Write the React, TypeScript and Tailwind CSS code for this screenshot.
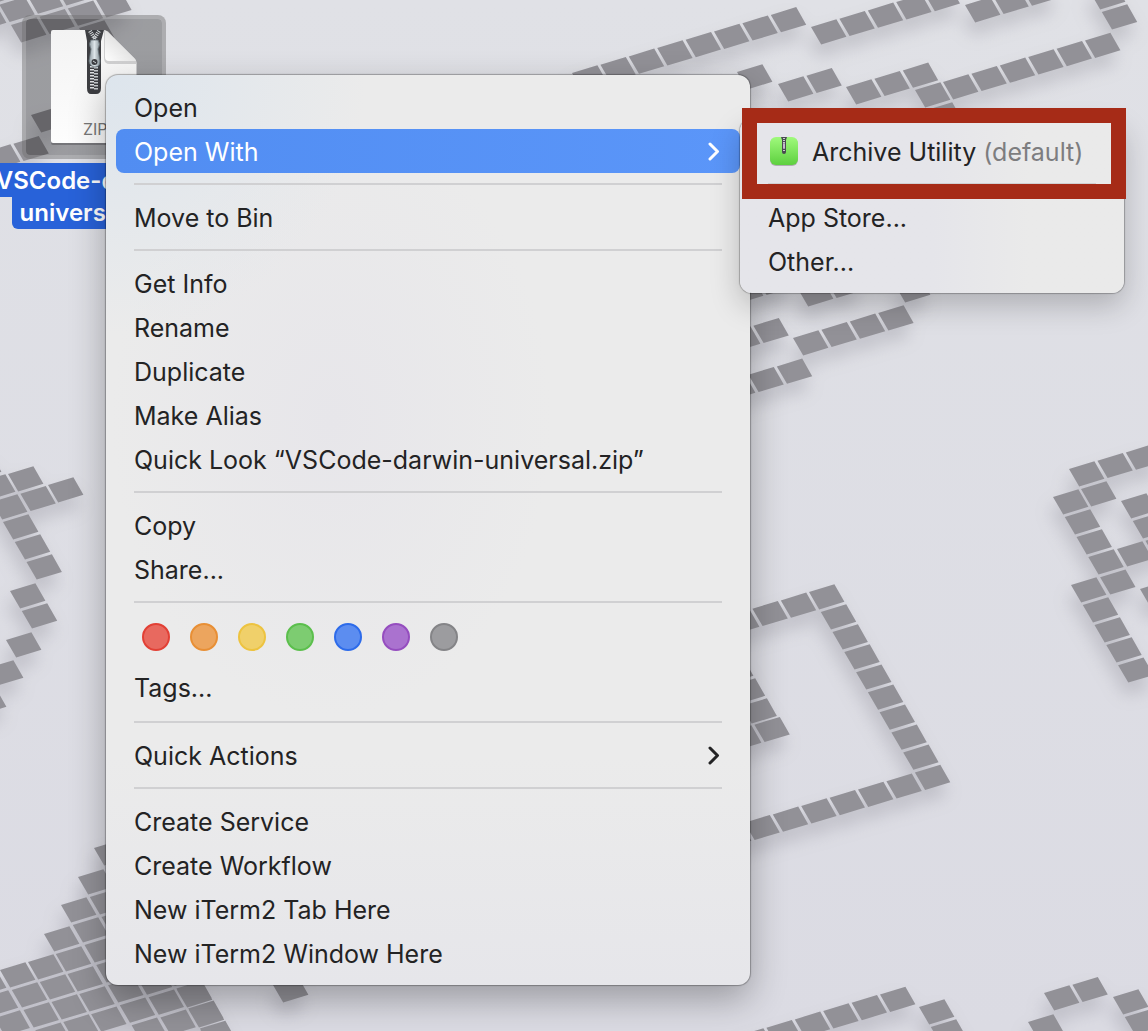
import type { ReactNode } from "react";

type Run = [x: number, y: number, count: number];

const STEP_RIGHT = [28.4, -8.3];
const STEP_DOWN = [11.77, 20.05];

const rowRuns: Run[] = [
  [11, 25, 4], [-29, 13, 4], [-41, -7, 2], [79, 28, 1], [31, 115, 1], [-15, 152, 2],
  [572, 73, 8], [811, 27, 5], [965, 5, 3], [943, 82, 6], [846, 87, 3], [737, 72, 1], [778, 84, 2],
  [793, 338, 4], [725, 334, 2], [720, 383, 3], [798, 289, 2], [895, 285, 1], [728, 286, 2],
  [8, 474, 1], [48, 485, 1], [-8, 502, 2], [-20, 482, 1], [-34, 462, 1], [6, 640, 1], [-12, 668, 1], [-29, 697, 1],
  [1069, 469, 3], [1081, 489, 1], [1117, 549, 2], [1140, 589, 1],
  [724, 617, 3], [726, 733, 2], [716, 831, 7],
  [273, 985, 1], [738, 1036, 6], [1044, 993, 2], [1028, 1022, 1],
];

const columnRuns: Run[] = [
  [1090, -8, 2], [915, 90, 2], [3, 522, 3], [10, 591, 2],
  [1053, 497, 5], [1121, 501, 2], [1071, 585, 5],
  [809, 592, 10], [718, 666, 3],
  [177, 990, 3], [94, 848, 10], [78, 877, 8], [61, 905, 7], [44, 934, 5], [28, 962, 4], [0, 970, 4], [-29, 978, 3],
  [919, 1007, 2], [1113, 997, 2],
];

function tiles(runs: Run[], step: number[]) {
  return runs
    .flatMap(([x, y, count]) =>
      Array.from({ length: count }, (_, i) => {
        const px = (x + step[0] * i).toFixed(1);
        const py = (y + step[1] * i).toFixed(1);
        return `M${px} ${py}l25.4 -7.8l10 17.6l-25.2 7.6z`;
      }),
    )
    .join("");
}

function Wallpaper() {
  return (
    <svg
      className="absolute inset-0 h-full w-full"
      viewBox="0 0 1148 1031"
      preserveAspectRatio="xMinYMin slice"
      aria-hidden="true"
    >
      <defs>
        <linearGradient id="sky" x1="0" y1="0" x2="0" y2="1">
          <stop offset="0" stopColor="#e0e1e6" />
          <stop offset="1" stopColor="#dbdbe3" />
        </linearGradient>
        <filter id="soft" x="-5%" y="-5%" width="110%" height="110%">
          <feGaussianBlur stdDeviation="9" />
        </filter>
      </defs>
      <rect width="1148" height="1031" fill="url(#sky)" />
      <path
        d={tiles(rowRuns, STEP_RIGHT) + tiles(columnRuns, STEP_DOWN)}
        transform="translate(-3 12)"
        fill="#8f8e98"
        opacity="0.42"
        filter="url(#soft)"
      />
      <path d={tiles(rowRuns, STEP_RIGHT) + tiles(columnRuns, STEP_DOWN)} fill="#929197" />
    </svg>
  );
}

function ZipIcon() {
  return (
    <svg className="h-[120px] w-[92px]" viewBox="0 0 92 120" aria-hidden="true">
      <defs>
        <linearGradient id="paper" x1="0" y1="0" x2="0" y2="1">
          <stop offset="0" stopColor="#f3f3f3" />
          <stop offset="1" stopColor="#fdfdfd" />
        </linearGradient>
        <linearGradient id="fold" x1="0" y1="1" x2="0.6" y2="0.3">
          <stop offset="0" stopColor="#ffffff" />
          <stop offset="1" stopColor="#dedede" />
        </linearGradient>
        <linearGradient id="metal" x1="0" y1="0" x2="1" y2="0">
          <stop offset="0" stopColor="#8e9aa1" />
          <stop offset="0.5" stopColor="#dde5e9" />
          <stop offset="1" stopColor="#8a959b" />
        </linearGradient>
      </defs>
      <path d="M5 3h52l29 29v82q0 2 -2 2H5q-2 0 -2 -2V5q0 -2 2 -2z" fill="#4a4a4e" opacity="0.45" transform="translate(0 1)" />
      <path d="M5 2h50q3 0 5 2l27 27q1.500 2 1.500 4v79q0 1 -2 1H5q-2 0 -2 -2V4q0 -2 2 -2z" fill="url(#paper)" />
      <path d="M56 3v27q0 6 6 6h26V33L60 3z" fill="#a9a9ab" opacity="0.5" />
      <path d="M57 3v26q0 4 4 4h27q0 -1 -2 -3L60 4q-2 -2 -3 -1z" fill="url(#fold)" />
      <path d="M37 2h19l-3 11v47q0 6 -5 6h-5q-4 0 -4 -6V13z" fill="#3d3e42" />
      <path d="M42 3l5 8M51 3l-5 8" stroke="#d4d7da" strokeWidth="4" strokeDasharray="1 1" />
      <path d="M44 38v24" stroke="#e0e2e4" strokeWidth="4" strokeDasharray="1.500 1.500" />
      <path d="M48 39v24" stroke="#c8cbce" strokeWidth="4" strokeDasharray="1.500 1.500" />
      <path d="M43 12h7q3 4 0 9l2 12q0 6 -5 6t-6 -6l2 -12q-3 -5 0 -9z" fill="url(#metal)" stroke="#677278" strokeWidth="0.8" />
      <circle cx="46.500" cy="34" r="3" fill="#3d3e42" />
      <path d="M45 33l3 2" stroke="#cfd5d8" />
      <text x="35" y="107" fontFamily="Inter, sans-serif" fontSize="16" fill="#777">ZIP</text>
    </svg>
  );
}

function DesktopFile() {
  return (
    <button type="button" className="absolute top-[15px] left-[-16px] flex w-[220px] flex-col items-center">
      <span className="flex h-[144px] w-[144px] items-start justify-center rounded-[8px] border-4 border-[#6e6e6e]/45 bg-black/30 bg-clip-padding pt-[9px]">
        <ZipIcon />
      </span>
      <span className="mt-1 flex flex-col items-center text-[24px] leading-[32px] font-semibold text-white">
        <span className="h-[34px] bg-[#2862d9] px-2 pt-[2px] whitespace-nowrap">VSCode-darwin-</span>
        <span className="rounded-b-[6px] bg-[#2862d9] px-2">universal.zip</span>
      </span>
    </button>
  );
}

function Chevron() {
  return (
    <svg className="mb-1 h-[20px] w-[14px]" viewBox="0 0 14 20" fill="none" stroke="currentColor" strokeWidth="3" aria-hidden="true">
      <path d="M3 3l7.500 7.500L3 18" strokeLinecap="round" strokeLinejoin="round" />
    </svg>
  );
}

function Item({ children }: { children: ReactNode }) {
  return (
    <button type="button" role="menuitem" className="flex h-11 w-full items-center pt-1 pr-[19px] pl-[18px] text-left whitespace-nowrap">
      {children}
    </button>
  );
}

function Separator() {
  return (
    <div role="separator" className="flex h-[22px] items-center px-[18px]">
      <div className="h-[2px] w-full bg-[#d0d0d2]" />
    </div>
  );
}

function ArchiveIcon() {
  return (
    <svg className="mr-3 mb-1 h-8 w-8" viewBox="0 0 32 32" aria-hidden="true">
      <defs>
        <linearGradient id="green" x1="0" y1="0" x2="0" y2="1">
          <stop offset="0" stopColor="#a0fa7c" />
          <stop offset="1" stopColor="#5dd03f" />
        </linearGradient>
      </defs>
      <rect x="2" y="3" width="28" height="28" rx="6" fill="#777" opacity="0.5" />
      <rect x="2" y="2" width="28" height="28" rx="6" fill="url(#green)" />
      <path d="M13 2h6l-1 3v12q0 2 -2 2t-2 -2V5z" fill="#4a4a52" />
      <path d="M16 3v5M16 15v2" stroke="#c9cbd0" strokeWidth="2" strokeDasharray="1 1" />
      <rect x="15" y="8" width="2" height="6" rx="1" fill="#c3b9cc" />
    </svg>
  );
}

function Submenu() {
  return (
    <div className="absolute top-[-10px] left-full w-[384px] text-[#232324]">
      <div role="menu" aria-label="Open With" className="rounded-[12px] bg-linear-to-r from-[#e5e5ea] from-50% to-[#eaeaea] to-75% p-[10px] shadow-[0_0_1px_1px_rgba(0,0,0,0.25),0_12px_30px_rgba(0,0,0,0.22)]">
        <Item>
          <ArchiveIcon />
          <span>
            Archive Utility <span className="text-[#7d7d7f]">(default)</span>
          </span>
        </Item>
        <Separator />
        <Item>App Store...</Item>
        <Item>Other...</Item>
      </div>
      <div className="pointer-events-none absolute top-[-11px] right-[-2px] left-[2px] h-[91px] border-[15px] border-[#a62b17]" />
    </div>
  );
}

const tags = [
  { name: "Red", style: "border-[#e24035] bg-[#e8695f]" },
  { name: "Orange", style: "border-[#e88f35] bg-[#eca55e]" },
  { name: "Yellow", style: "border-[#edc340] bg-[#f0d06a]" },
  { name: "Green", style: "border-[#5bbf4c] bg-[#7dcc71]" },
  { name: "Blue", style: "border-[#2d6bea] bg-[#5c8df0]" },
  { name: "Purple", style: "border-[#954dbf] bg-[#aa72cf]" },
  { name: "Grey", style: "border-[#848487] bg-[#9c9c9f]" },
];

function ContextMenu() {
  return (
    <div
      role="menu"
      aria-label="File actions"
      className="absolute top-[75px] left-[106px] w-[644px] rounded-[12px] bg-[#ebebeb] bg-[radial-gradient(circle_at_0_0,#dde5ed,transparent_260px),radial-gradient(ellipse_at_35%_38%,#e7e6ea,transparent_220px),linear-gradient(#ebebeb_75%,#e6e6ea)] p-[10px] shadow-[0_0_1px_1px_rgba(0,0,0,0.28),0_14px_36px_rgba(0,0,0,0.3)]"
    >
      <Item>Open</Item>
      <div className="relative">
        <button
          type="button"
          role="menuitem"
          aria-haspopup="menu"
          aria-expanded="true"
          className="flex h-11 w-full items-center justify-between rounded-[8px] bg-linear-to-r from-[#518df2] to-[#5b96f9] pt-1 pr-[19px] pl-[18px] text-left text-white"
        >
          Open With
          <Chevron />
        </button>
        <Submenu />
      </div>
      <Separator />
      <Item>Move to Bin</Item>
      <Separator />
      <Item>Get Info</Item>
      <Item>Rename</Item>
      <Item>Duplicate</Item>
      <Item>Make Alias</Item>
      <Item>Quick Look “VSCode-darwin-universal.zip”</Item>
      <Separator />
      <Item>Copy</Item>
      <Item>Share...</Item>
      <Separator />
      <div className="pb-[2px]">
        <div className="flex h-[52px] items-start gap-5 pt-[10px] pl-[26px]">
          {tags.map((tag) => (
            <button key={tag.name} type="button" aria-label={tag.name} className={`h-7 w-7 rounded-full border-2 ${tag.style}`} />
          ))}
        </div>
        <Item>Tags...</Item>
      </div>
      <Separator />
      <Item>
        <span className="flex-1">Quick Actions</span>
        <Chevron />
      </Item>
      <Separator />
      <Item>Create Service</Item>
      <Item>Create Workflow</Item>
      <Item>New iTerm2 Tab Here</Item>
      <Item>New iTerm2 Window Here</Item>
    </div>
  );
}

export default function App() {
  return (
    <main className="relative min-h-screen overflow-hidden bg-[#dedfe5] font-['Inter',sans-serif] text-[25px] text-[#232324]">
      <Wallpaper />
      <DesktopFile />
      <ContextMenu />
    </main>
  );
}
